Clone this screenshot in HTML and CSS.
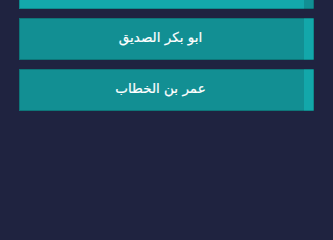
FILE: index.html
```html
<!DOCTYPE html>
<html lang="ar">
<head>
<meta charset="utf-8">
<link rel="stylesheet" href="styles.css">
</head>
<body>
<div class="list">
  <div class="card active"><div class="label"></div><div class="stripe"></div></div>
  <div class="card"><div class="label">ابو بكر الصديق</div><div class="stripe"></div></div>
  <div class="card"><div class="label">عمر بن الخطاب</div><div class="stripe"></div></div>
</div>
</body>
</html>
```
FILE: styles.css
```css
html, body {
  margin: 0;
  padding: 0;
  background: #1f2340;
  height: 100%;
  overflow: hidden;
}
.list {
  display: flex;
  flex-direction: column;
  gap: 9px;
  padding: 0 19px;
  margin-top: -33px;
}
.card {
  display: flex;
  height: 42px;
  background: #128f93;
  box-shadow: inset 0 0 0 1px rgba(0, 0, 0, 0.18);
}
.label {
  flex: 1;
  display: flex;
  align-items: center;
  justify-content: center;
  color: #ffffff;
  font-family: "DejaVu Sans", sans-serif;
  font-size: 13.5px;
  -webkit-text-stroke: 0.2px #ffffff;
  padding-bottom: 4px;
  padding-right: 2px;
}
.stripe {
  width: 10px;
  background: #13a7aa;
  box-shadow: inset -1px 0 0 rgba(0, 0, 0, 0.18), inset 0 1px 0 rgba(0,0,0,0.18), inset 0 -1px 0 rgba(0,0,0,0.18);
}
.card.active {
  background: #13a8ab;
}
.card.active .stripe {
  background: #118f93;
}
```
